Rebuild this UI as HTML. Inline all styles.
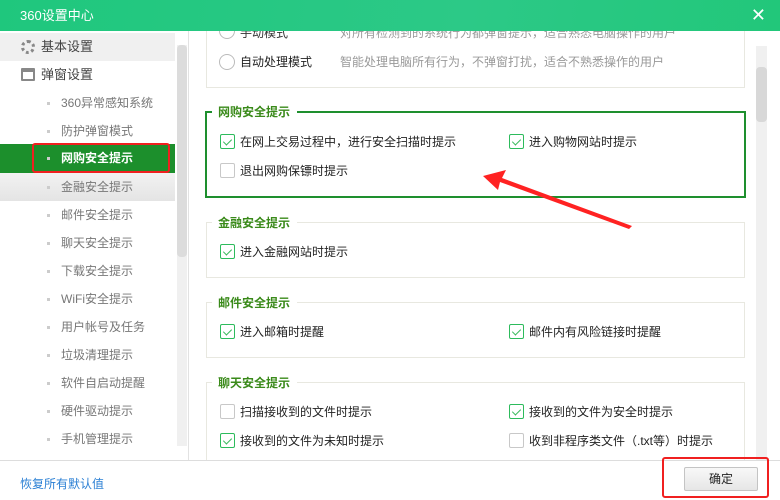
<!DOCTYPE html>
<html><head><meta charset="utf-8"><style>
*{margin:0;padding:0;box-sizing:border-box}
body{width:780px;height:500px;position:relative;overflow:hidden;background:#fff;font-family:"Liberation Sans","Noto Sans CJK SC",sans-serif;font-size:12px;color:#333}
.abs{position:absolute}
.title{left:0;top:0;width:780px;height:31px;background:linear-gradient(100deg,#1fc77d 0%,#2cc987 60%,#22c77a 100%);color:#fff;font-size:13px;line-height:31px;padding-left:20px;z-index:5}
.side{left:0;top:31px;width:189px;height:429px;background:#fff;border-right:1px solid #e2e2e2}
.it{position:absolute;left:0;width:175px;height:28px;line-height:28px;color:#777;font-size:12px;padding-left:61px}
.it:before{content:"";position:absolute;left:47px;top:13px;width:3px;height:3px;background:#ccc}
.hd{position:absolute;left:0;width:175px;height:28px;line-height:28px;color:#444;font-size:13px;padding-left:41px}
.cb{position:absolute;width:15px;height:15px;border:1px solid #c8c8c8;border-radius:2px;background:#fff}
.cb.on{border-color:#2dbb5c}
.cb.on:after{content:"";position:absolute;left:4px;top:2px;width:4px;height:7px;border:solid #3bbb5e;border-width:0 1px 1px 0;transform:rotate(45deg)}
.lb{position:absolute;font-size:12px;color:#222;line-height:15px}
.box{position:absolute;left:206px;width:539px;border:1px solid #e8e8e0}
.gt{position:absolute;background:#fff;color:#3a8a1a;font-size:12px;font-weight:bold;padding:0 7px 0 6px;line-height:14px}
</style></head><body>
<div class="abs title">360设置中心<span style="position:absolute;right:14px;top:0;font-size:18px">✕</span></div>
<div class="abs side">
  <div class="hd" style="top:2px;background:#f0f0f0"><span style="position:absolute;left:21px;top:7px;width:14px;height:14px;border-radius:50%;border:3px dotted #888"></span>基本设置</div>
  <div class="hd" style="top:30px"><span style="position:absolute;left:21px;top:7px;width:14px;height:13px;border:2px solid #888;border-top-width:4px;border-radius:1px"></span>弹窗设置</div>
  <div class="it" style="top:58px">360异常感知系统</div>
  <div class="it" style="top:86px">防护弹窗模式</div>
  <div class="it" style="top:113px;background:#1c8f2c;color:#fff;font-weight:bold;height:29px">网购安全提示</div>
  <div class="it" style="top:142px;background:linear-gradient(#f2f2f2,#e4e4e4)">金融安全提示</div>
  <div class="it" style="top:170px">邮件安全提示</div>
  <div class="it" style="top:198px">聊天安全提示</div>
  <div class="it" style="top:226px">下载安全提示</div>
  <div class="it" style="top:254px">WiFi安全提示</div>
  <div class="it" style="top:282px">用户帐号及任务</div>
  <div class="it" style="top:310px">垃圾清理提示</div>
  <div class="it" style="top:338px">软件自启动提醒</div>
  <div class="it" style="top:366px">硬件驱动提示</div>
  <div class="it" style="top:394px">手机管理提示</div>
  <div class="abs" style="left:177px;top:14px;width:10px;height:401px;background:#f0f0f0"></div>
  <div class="abs" style="left:177px;top:14px;width:10px;height:212px;background:#dcdcdc;border-radius:4px"></div>
</div>
<div class="abs" style="left:32px;top:143px;width:138px;height:30px;border:2px solid #f02020;border-radius:3px"></div>

<div class="abs" style="left:756px;top:46px;width:11px;height:414px;background:#f0f0f0"></div>
<div class="abs" style="left:756px;top:67px;width:11px;height:55px;background:#d8d8d8;border-radius:4px"></div>

<div class="box" style="top:20px;height:68px;border-top:none"></div>
<div class="abs" style="left:219px;top:23px;width:16px;height:16px;border:1px solid #bbb;border-radius:50%"></div>
<div class="lb" style="left:240px;top:26px;color:#333">手动模式</div>
<div class="lb" style="left:340px;top:26px;color:#999">对所有检测到的系统行为都弹窗提示，适合熟悉电脑操作的用户</div>
<div class="abs" style="left:219px;top:54px;width:16px;height:16px;border:1px solid #bbb;border-radius:50%"></div>
<div class="lb" style="left:240px;top:55px">自动处理模式</div>
<div class="lb" style="left:340px;top:55px;color:#999">智能处理电脑所有行为，不弹窗打扰，适合不熟悉操作的用户</div>

<div class="box" style="top:111px;height:87px;border:2px solid #1e8f2e;left:205px;width:541px"></div>
<div class="gt" style="left:212px;top:105px">网购安全提示</div>
<div class="cb on" style="left:220px;top:134px"></div><div class="lb" style="left:240px;top:135px">在网上交易过程中，进行安全扫描时提示</div>
<div class="cb on" style="left:509px;top:134px"></div><div class="lb" style="left:529px;top:135px">进入购物网站时提示</div>
<div class="cb" style="left:220px;top:163px"></div><div class="lb" style="left:240px;top:164px">退出网购保镖时提示</div>

<div class="box" style="top:222px;height:56px"></div>
<div class="gt" style="left:212px;top:216px">金融安全提示</div>
<div class="cb on" style="left:220px;top:244px"></div><div class="lb" style="left:240px;top:245px">进入金融网站时提示</div>

<div class="box" style="top:302px;height:56px"></div>
<div class="gt" style="left:212px;top:296px">邮件安全提示</div>
<div class="cb on" style="left:220px;top:324px"></div><div class="lb" style="left:240px;top:325px">进入邮箱时提醒</div>
<div class="cb on" style="left:509px;top:324px"></div><div class="lb" style="left:529px;top:325px">邮件内有风险链接时提醒</div>

<div class="box" style="top:382px;height:90px"></div>
<div class="gt" style="left:212px;top:376px">聊天安全提示</div>
<div class="cb" style="left:220px;top:404px"></div><div class="lb" style="left:240px;top:405px">扫描接收到的文件时提示</div>
<div class="cb on" style="left:509px;top:404px"></div><div class="lb" style="left:529px;top:405px">接收到的文件为安全时提示</div>
<div class="cb on" style="left:220px;top:433px"></div><div class="lb" style="left:240px;top:434px">接收到的文件为未知时提示</div>
<div class="cb" style="left:509px;top:433px"></div><div class="lb" style="left:529px;top:434px">收到非程序类文件（.txt等）时提示</div>

<svg class="abs" style="left:0;top:0" width="780" height="500"><polygon points="483,176 506,170 502,178 632,226 629,229 500,182 498,190" fill="#f22"/></svg>

<div class="abs" style="left:0;top:460px;width:780px;height:40px;background:#fff;border-top:1px solid #ddd"></div>
<div class="abs" style="left:20px;top:475px;color:#2a7fd4;font-size:12px">恢复所有默认值</div>
<div class="abs" style="left:684px;top:467px;width:74px;height:24px;border:1px solid #c4c4c4;background:linear-gradient(#f8f8f8,#e6e6e6);border-radius:2px;text-align:center;line-height:22px;font-size:12px;color:#222">确定</div>
<div class="abs" style="left:662px;top:457px;width:107px;height:41px;border:2px solid #f02020;border-radius:3px"></div>
</body></html>
